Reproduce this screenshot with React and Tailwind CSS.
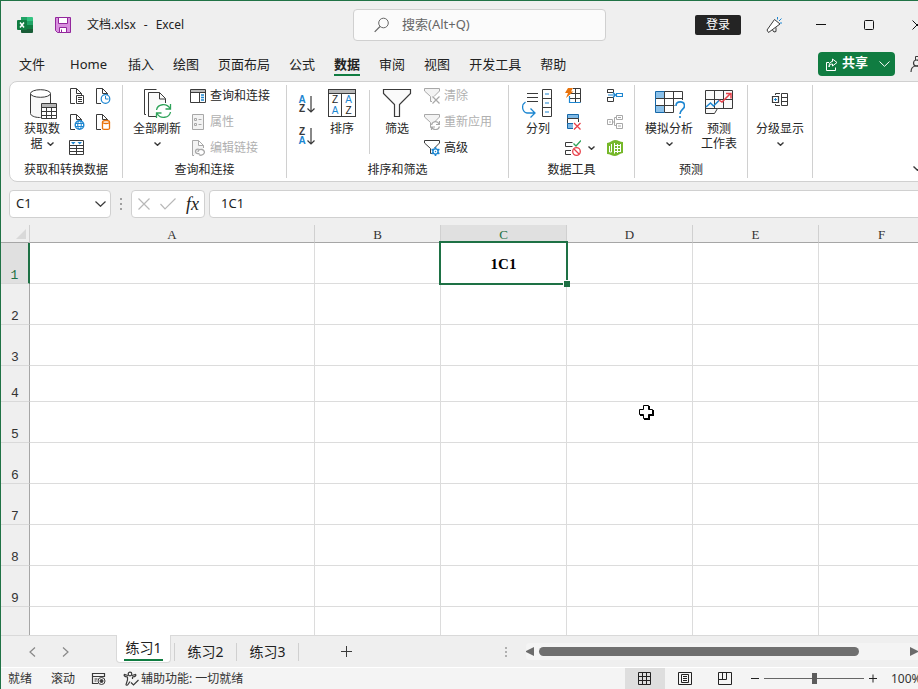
import React from "react";

const INK = "#3a3a3a";
const BLUE = "#1c86d1";
const GREEN = "#2fa35a";
const ORANGE = "#e8730c";
const RED = "#e8404a";
const MUTE = "#a8a8a8";

function Icon({ w = 16, h = 16, children, color = INK }) {
  return (
    <svg width={w} height={h} viewBox={`0 0 ${w} ${h}`} fill="none" stroke={color} strokeWidth="1" className="shrink-0" aria-hidden="true">
      {children}
    </svg>
  );
}

function Chevron({ w = 7, h = 4, stroke = 1.4, color = INK }) {
  return (
    <svg width={w} height={h} viewBox={`0 0 ${w} ${h}`} fill="none" stroke={color} strokeWidth={stroke} className="inline-block shrink-0" aria-hidden="true">
      <path d={`M.5 .5L${w / 2} ${h - 0.7}L${w - 0.5} .5`} />
    </svg>
  );
}

const ExcelLogo = () => (
  <svg width="16" height="16" viewBox="0 0 16 16" aria-hidden="true">
    <path d="M4 0h6v4H4z" fill="#21a366" />
    <path d="M10 0h5a1 1 0 0 1 1 1v3h-6z" fill="#33c481" />
    <path d="M4 4h6v4H4z" fill="#107c41" />
    <path d="M10 4h6v4h-6z" fill="#21a366" />
    <path d="M4 8h6v4H4z" fill="#185c37" />
    <path d="M10 8h6v4h-6z" fill="#107c41" />
    <path d="M4 12h12v3a1 1 0 0 1-1 1H5a1 1 0 0 1-1-1z" fill="#185c37" />
    <rect x="0" y="3" width="10" height="10" rx="1" fill="#107c41" />
    <path d="M3 5.5l4 5M7 5.5l-4 5" stroke="#fff" strokeWidth="1.5" />
  </svg>
);

const SaveIcon = () => (
  <svg width="16" height="16" viewBox="0 0 16 16" stroke="#93279c" aria-hidden="true">
    <path d="M.5 .5h15v15H2.5l-2-2z" fill="#d88fde" />
    <path d="M3.5 .5h9v6h-9z" fill="#fff" />
    <path d="M4.500 15.500v-5h7v5z" fill="#fff" />
    <path d="M6.500 12.500v3" />
  </svg>
);

const SearchIcon = () => (
  <Icon color="#666">
    <circle cx="9.500" cy="6" r="4.800" />
    <path d="M6 9.500L.7 14.800" strokeWidth="1.200" />
  </Icon>
);

const Megaphone = () => (
  <Icon>
    <path d="M8.500 2.500L1 13l1.500 2.500L14 7z" fill="#fff" />
    <path d="M6.500 13l1.500 2 2-.5v-4" />
    <path d="M11.500 0v2.500M13 4l2.500-2.500M14 6h2" stroke={BLUE} />
  </Icon>
);

const ShareIcon = () => (
  <Icon w={13} h={13} color="#fff">
    <path d="M4 4.500H1.500v8h9V9.500" />
    <path d="M7.500 1l4.500 3.500L7.500 8V6C5.500 6 4.500 7 4 9c0-3 1-5.500 3.500-5.500z" />
  </Icon>
);

const PersonIcon = () => (
  <Icon>
    <path d="M5.500 4V.5H16" />
    <circle cx="6.500" cy="7" r="3" strokeWidth="1.200" />
    <path d="M1 16c0-4 2.500-6 5.500-6s5.500 2 5.500 6" strokeWidth="1.200" />
  </Icon>
);

const DatabaseTable = () => (
  <Icon w={34} h={30}>
    <path d="M6 5h20v9H16v14c-6 0-10-2-10-4z" fill="#f8f8f8" stroke="none" />
    <path d="M5.500 4.500v20c0 2 4 4 9 4h1M25.500 4.500V14" />
    <ellipse cx="15.500" cy="4.500" rx="10" ry="3.800" fill="#fff" />
    <path d="M16.500 14.500h15v15h-15z" fill="#fff" />
    <path d="M17 15h14v3H17z" fill="#b5b5b5" stroke="none" />
    <path d="M16.500 18.500h15M16.500 22.500h15M16.500 26.500h15M21.500 18v11M26.500 18v11" />
  </Icon>
);

const Page = ({ color = INK }) => (
  <path d="M6 15.500H1.500V.5h6l5 5V7M7.500 .5v5h5" stroke={color} />
);
const PageText = () => (
  <Icon>
    <Page />
    <path d="M7.500 7.500h7v8h-7z" fill="#fff" />
    <path d="M9 9.500h4M9 11.500h4M9 13.500h4" />
  </Icon>
);
const PageClock = () => (
  <Icon>
    <Page />
    <circle cx="10.500" cy="11" r="4.300" fill="#fff" stroke={BLUE} strokeWidth="1.200" />
    <path d="M10.500 8v3h3" stroke={BLUE} />
  </Icon>
);
const PageGlobe = () => (
  <Icon>
    <Page />
    <circle cx="10.500" cy="11" r="4.300" fill="#fff" stroke={BLUE} strokeWidth="1.400" />
    <ellipse cx="10.500" cy="11" rx="1.800" ry="4.300" stroke={BLUE} />
    <path d="M6.500 9.500h8M6.500 12.500h8" stroke={BLUE} />
  </Icon>
);
const PageData = () => (
  <Icon>
    <Page />
    <path d="M7.500 8v6.500c0 1.300 7 1.300 7 0V8" fill="#fff" stroke={ORANGE} strokeWidth="1.300" />
    <ellipse cx="11" cy="8" rx="3.500" ry="1.500" fill="#fff" stroke={ORANGE} strokeWidth="1.300" />
  </Icon>
);
const TableBlue = () => (
  <Icon>
    <path d="M.5 .5h14v14H.5zM.5 5.500h14M.5 8.500h14M.5 11.500h14M7.500 5.500v9" />
    <path d="M2 2h4.500L4.250 4.500zM8.500 2H13l-2.250 2.500z" fill={BLUE} stroke="none" />
  </Icon>
);

const RefreshAll = () => (
  <Icon w={30} h={30}>
    <path d="M4 25.500H2.500V.5h12" />
    <path d="M14 27.500H6.500V3.500h11l6 6V14" fill="#fafafa" />
    <path d="M17.500 3.500v6.500h6" />
    <circle cx="21" cy="22" r="8" fill="#fff" stroke="none" />
    <path d="M14.500 21c1-6 10-7.500 13.500-1.500M28.500 15v5h-5M28.500 23c-1 6-10 7.500-13.500 1.500M14.500 29v-5h5" stroke={GREEN} strokeWidth="1.300" />
  </Icon>
);
const PanelIcon = () => (
  <Icon>
    <path d="M1 2h14v2H1z" fill="#bbb" stroke="none" />
    <path d="M.5 1.500h15v13H.5zM.5 4.500h15M9.500 4.500v10" />
    <path d="M11 7h3M11 9.500h3M11 12h3" stroke={BLUE} strokeWidth="1.500" />
  </Icon>
);
const PropsIcon = () => (
  <Icon color={MUTE}>
    <path d="M2.500 .5h11v15h-11z" fill="#f3f3f3" />
    <path d="M4.500 4.500h2v2h-2zM4.500 9.500h2v2h-2zM8.500 5.500h3M8.500 10.500h3" />
  </Icon>
);
const EditLinks = () => (
  <Icon color={MUTE}>
    <path d="M4 15.500H2.500V.5h6l5 5V8M8.500 .5v5h5" fill="#f3f3f3" />
    <path d="M9.500 9.500c-2-1-4 0-4 2s2 2.500 4 2M8 12c0-2 2-3 4-2.500s3 2.500 2 4-4 2.500-5 1" strokeWidth="1.300" />
  </Icon>
);

const SortArrow = ({ top, bottom, topClass, bottomClass }) => (
  <span className="flex h-[18px] w-[17px] items-center justify-between font-['Liberation_Sans',sans-serif] text-[10px] font-bold leading-[9px]">
    <span className="flex w-2 flex-col items-center">
      <span className={topClass}>{top}</span>
      <span className={bottomClass}>{bottom}</span>
    </span>
    <Icon w={8} h={17}>
      <path d="M4 0v16M.5 12.500L4 16l3.500-3.500" strokeWidth="1.200" />
    </Icon>
  </span>
);
const SortBox = () => (
  <span className="mb-[2px] flex h-7 w-7 flex-col border border-[#3a3a3a] bg-white font-['Liberation_Sans',sans-serif] text-[10px] leading-[11px]">
    <span className="h-1 border-b border-[#3a3a3a] bg-[#b8b8b8]" />
    <span className="grid flex-1 grid-cols-2 text-center">
      <span className="flex flex-col border-r border-[#3a3a3a]">
        <span>Z</span>
        <span className="text-[#1c86d1]">A</span>
      </span>
      <span className="flex flex-col">
        <span className="text-[#1c86d1]">A</span>
        <span>Z</span>
      </span>
    </span>
  </span>
);
const BigFunnel = () => (
  <Icon w={30} h={30}>
    <path d="M1.500 .5h27v4l-11 11v12h-5v-12l-11-11z" fill="#fafafa" strokeWidth="1.200" />
  </Icon>
);
const funnel = "M8 13.500H6.500V8.500L.5 3V.5h15V3L10 8.500";
const ClearIcon = () => (
  <Icon color={MUTE}>
    <path d={funnel} fill="#f3f3f3" />
    <path d="M8.500 8.500l7 7M15.500 8.500l-7 7" strokeWidth="1.200" />
  </Icon>
);
const ReapplyIcon = () => (
  <Icon color={MUTE}>
    <path d={funnel} fill="#f3f3f3" />
    <circle cx="11.500" cy="11.500" r="4.500" fill="#fff" stroke="none" />
    <path d="M7.500 11c1-4 6-4.500 7.500-1M15.500 7v3.500H12M15.500 12.500c-1 4-6 4-7.500 1M7.500 16v-3H11" strokeWidth="1.200" />
  </Icon>
);
const AdvancedIcon = () => (
  <Icon>
    <path d={funnel} />
    <circle cx="11.500" cy="11.500" r="2.600" fill="#fff" stroke={BLUE} strokeWidth="1.400" />
    <path d="M11.500 7v2M11.500 14v2M7.600 9.200l1.700 1M13.700 12.800l1.700 1M7.600 13.800l1.700-1M13.700 10.200l1.700-1" stroke={BLUE} strokeWidth="1.600" />
    <circle cx="11.500" cy="11.500" r=".7" fill={BLUE} stroke="none" />
  </Icon>
);

const TextToColumns = () => (
  <Icon w={32} h={30}>
    <path d="M5 4.500h11M5 8.500h11M5 12.500h11" strokeWidth="1.200" />
    <path d="M20.500 .5h9v27h-9zM20.500 9.500h9M20.500 18.500h9" />
    <path d="M23 5h4M23 14h4M23 23h4" stroke={BLUE} strokeWidth="1.200" />
    <path d="M3.500 13C-1 16 0 23 5 24h7M8.500 19.500L13 24l-4.500 4.500" stroke={BLUE} strokeWidth="1.300" />
  </Icon>
);
const FlashFill = () => (
  <Icon>
    <path d="M8 .5h7.500v14M10.500 .5v14M5 5.500h10M5 10.500h10" />
    <path d="M4.500 8v6.500h11" stroke={BLUE} strokeWidth="1.200" />
    <path d="M3 0h5L6 3.500h2.500L1 10l2-5H0z" fill={ORANGE} stroke="none" />
  </Icon>
);
const RemoveDup = () => (
  <Icon>
    <path d="M2.500 .5h11v4h-11z" fill="#7fb9e6" stroke="#1668a8" />
    <path d="M2.500 4.500h11v5h-11z" fill="#fff" />
    <path d="M2.500 9.500h6v5h-6z" fill="#7fb9e6" stroke="#1668a8" />
    <path d="M8 8h8v8H8z" fill="#fff" stroke="none" />
    <path d="M9 9l6.500 6.500M15.500 9L9 15.500" stroke={RED} strokeWidth="1.300" />
  </Icon>
);
const Validation = () => (
  <Icon>
    <path d="M7.500 2.500H.5v4h7M6 10.500H.5v4H6" />
    <path d="M8.500 3.500l2.500 2.500 5-5.500" stroke={GREEN} strokeWidth="1.300" />
    <circle cx="11.500" cy="11.500" r="3.800" stroke={RED} strokeWidth="1.300" />
    <path d="M9 9l5 5" stroke={RED} strokeWidth="1.300" />
  </Icon>
);
const Consolidate = () => (
  <Icon>
    <path d="M.5 5V1.500h6V5M.5 9v4.500h6V9M.5 4.500h6M.5 9.500h6" />
    <path d="M1 7h7M6 4.500L8.500 7 6 9.500M9.500 5.500h6v3h-6z" stroke={BLUE} strokeWidth="1.200" />
  </Icon>
);
const Relations = () => (
  <Icon color={MUTE}>
    <path d="M.5 5.500h5v5h-5zM9.500 1.500h6v4h-6zM9.500 9.500h6v5h-6zM5.500 8h2M9.500 3.500h-2v8h2M2 8h2M11 3.500h3M11 12h3" />
  </Icon>
);
const DataModel = () => (
  <svg width="16" height="16" viewBox="0 0 16 16" aria-hidden="true">
    <path d="M0 3c3 0 5-3 8-3s5 2 8 2v11c-3 0-5 3-8 3s-5-2-8-2z" fill="#76b82a" />
    <path d="M4.500 4v8M2.500 6v6h2M7.500 3v10.500M7.500 5.500h6M7.500 8.500h6M7.500 11.500h6M10.500 4v9M13.500 4v8" stroke="#fff" fill="none" />
  </svg>
);

const WhatIf = () => (
  <Icon w={32} h={30}>
    <path d="M3 3h8v20H3z" fill="#8bc1ea" stroke="none" />
    <path d="M3 10h8v6H3z" fill="#fff" stroke="none" />
    <path d="M11 2.500h18.500V12M2.500 9.500h27M2.500 16.500h19M11.500 2.500v21h9M20.500 2.500v21" />
    <path d="M11.500 2.500h-9v21h9" stroke="#1668a8" />
    <path d="M22 11h10v19H22z" fill="#fff" stroke="none" />
    <path d="M23 17c0-5.500 8.500-5.500 8.500 0 0 3.500-4.500 3.500-4.500 8" stroke={BLUE} strokeWidth="1.600" />
    <path d="M26.200 27h1.600v2h-1.600z" fill={BLUE} stroke="none" />
  </Icon>
);
const Forecast = () => (
  <Icon w={30} h={30}>
    <path d="M1.500 1.500h27v18H13.500l-3 5h-9zM1.500 19.500h12M1.500 10.500h27M10.500 1.500v18M19.500 1.500v18" fill="#fafafa" />
    <path d="M2 18l4.500-4 3 3 6-6" stroke={BLUE} strokeWidth="1.500" />
    <path d="M15 11l3 2 8.500-8.500M22 4.500h5v5" stroke={RED} strokeWidth="1.500" />
  </Icon>
);
const Outline = () => (
  <Icon w={18} h={30}>
    <path d="M10.500 4.500h6v12h-6zM10.500 8.500h6M10.500 12.500h6M4.500 6V4.500H9M4.500 15v1.500H9" />
    <path d="M1.500 7.500h6v6h-6z" fill="#fff" strokeWidth="1.200" />
    <path d="M4.500 9v3M3 10.500h3" stroke={BLUE} />
  </Icon>
);

function BigButton({ icon, lines, arrow, arrowBelow, wide }) {
  return (
    <button type="button" className={`mt-px flex shrink-0 flex-col items-center gap-[2px] text-xs leading-[15px] ${wide ? "w-12" : "w-9"}`}>
      {icon}
      <span className="flex flex-col items-center whitespace-nowrap">
        {lines.map((line, i) => (
          <span key={line} className="flex items-center gap-1">
            {line}
            {arrow && i === lines.length - 1 && <Chevron />}
          </span>
        ))}
        {arrowBelow && (
          <span className="flex h-[15px] items-center">
            <Chevron />
          </span>
        )}
      </span>
    </button>
  );
}

function SmallButton({ icon, label, disabled }) {
  return (
    <button type="button" disabled={disabled} className="flex h-4 items-center gap-1 whitespace-nowrap text-xs leading-4 disabled:text-[#b0b0b0]">
      {icon}
      {label}
    </button>
  );
}

function IconButton({ label, children }) {
  return (
    <button type="button" aria-label={label} className="flex h-4 items-center gap-[7px]">
      {children}
    </button>
  );
}

function Group({ title, className, children }) {
  return (
    <section className={`my-[3px] flex h-[93px] shrink-0 flex-col justify-between border-r border-[#d0d0d0] pb-px pt-[3px] ${className}`}>
      <div className="flex items-start">{children}</div>
      {title && <h2 className="self-stretch text-center text-xs leading-[14px]">{title}</h2>}
    </section>
  );
}

function TitleBar() {
  return (
    <header className="-mr-[23px] flex h-12 shrink-0 items-center">
      <div className="flex w-[352px] shrink-0 items-center pl-4">
        <ExcelLogo />
        <button type="button" aria-label="保存" className="ml-[22px]">
          <SaveIcon />
        </button>
        <h1 className="ml-4 flex gap-2 whitespace-nowrap text-xs">
          <span>文档.xlsx</span>
          <span>-</span>
          <span>Excel</span>
        </h1>
      </div>
      <label className="flex h-8 w-[253px] shrink-0 items-center gap-3 rounded border border-[#d0d0d0] bg-[#fbfbfb] pl-5">
        <SearchIcon />
        <input type="text" aria-label="搜索" placeholder="搜索(Alt+Q)" className="w-full min-w-0 bg-transparent text-[13px] outline-none placeholder:text-[#666]" />
      </label>
      <div className="ml-auto flex items-center">
        <button type="button" className="h-5 w-[46px] rounded-xs bg-[#242424] text-xs leading-5 text-white">登录</button>
        <button type="button" aria-label="新增功能" className="ml-[25px] mr-[15px]">
          <Megaphone />
        </button>
        <button type="button" aria-label="最小化" className="flex w-12 justify-center">
          <Icon w={10} h={10} color="#111"><path d="M0 4.500h10" /></Icon>
        </button>
        <button type="button" aria-label="最大化" className="flex w-12 justify-center">
          <Icon w={10} h={10} color="#111"><rect x=".5" y=".5" width="9" height="9" rx="1" /></Icon>
        </button>
        <button type="button" aria-label="关闭" className="flex w-12 justify-center">
          <Icon w={10} h={10} color="#111"><path d="M.5 .5l9 9M9.500 .5l-9 9" /></Icon>
        </button>
      </div>
    </header>
  );
}

const MENU = ["文件", "Home", "插入", "绘图", "页面布局", "公式", "数据", "审阅", "视图", "开发工具", "帮助"];

function MenuBar() {
  return (
    <nav className="-mr-2 flex h-8 shrink-0 items-start pl-[18px] text-[13px]">
      <ul className="flex gap-[19px]">
        {MENU.map((item) => (
          <li key={item} className={item === "Home" ? "pl-[6px] pr-[2px]" : ""}>
            <a href="#" className={`block h-[27px] whitespace-nowrap leading-[30px] ${item === "数据" ? "border-b-2 border-[#107c41] font-bold" : ""}`}>
              {item}
            </a>
          </li>
        ))}
      </ul>
      <div className="ml-auto flex items-center gap-[15px] pt-[3px]">
        <button type="button" className="flex h-6 w-[77px] items-center rounded bg-[#107c41] pl-[7px] font-bold text-white">
          <ShareIcon />
          <span className="ml-1 mr-[11px] pb-1 leading-5">共享</span>
          <Chevron w={11} h={6} stroke={1} color="#fff" />
        </button>
        <button type="button" aria-label="账户">
          <PersonIcon />
        </button>
      </div>
    </nav>
  );
}

function Ribbon() {
  return (
    <div className="-mr-4 ml-2 flex shrink-0 rounded-lg border border-[#d0d0d0] bg-white text-[#262626]">
      <Group title="获取和转换数据" className="w-[113px]">
        <div className="ml-[14px]">
          <BigButton icon={<DatabaseTable />} lines={["获取数", "据"]} arrow />
        </div>
        <div className="ml-[9px] grid grid-cols-[16px_16px] gap-[10px]">
          <IconButton label="从文本/CSV"><PageText /></IconButton>
          <IconButton label="最近使用的源"><PageClock /></IconButton>
          <IconButton label="自网站"><PageGlobe /></IconButton>
          <IconButton label="现有连接"><PageData /></IconButton>
          <IconButton label="来自表格/区域"><TableBlue /></IconButton>
        </div>
      </Group>
      <Group title="查询和连接" className="w-[164px]">
        <div className="ml-[10px] mr-[9px]">
          <BigButton icon={<RefreshAll />} lines={["全部刷新"]} arrowBelow wide />
        </div>
        <div className="flex flex-col gap-[10px]">
          <SmallButton icon={<PanelIcon />} label="查询和连接" />
          <SmallButton icon={<PropsIcon />} label="属性" disabled />
          <SmallButton icon={<EditLinks />} label="编辑链接" disabled />
        </div>
      </Group>
      <Group title="排序和筛选" className="w-[222px]">
        <div className="ml-[11px] mr-[9px] flex flex-col gap-[14px] pt-[7px]">
          <button type="button" aria-label="升序">
            <SortArrow top="A" bottom="Z" topClass="text-[#1c86d1]" bottomClass="text-[#3a3a3a]" />
          </button>
          <button type="button" aria-label="降序">
            <SortArrow top="Z" bottom="A" topClass="text-[#3a3a3a]" bottomClass="text-[#1c86d1]" />
          </button>
        </div>
        <BigButton icon={<SortBox />} lines={["排序"]} />
        <div className="mx-[9px] mt-[2px] h-16 border-l border-[#d0d0d0]" />
        <BigButton icon={<BigFunnel />} lines={["筛选"]} />
        <div className="ml-[9px] flex flex-col gap-[10px]">
          <SmallButton icon={<ClearIcon />} label="清除" disabled />
          <SmallButton icon={<ReapplyIcon />} label="重新应用" disabled />
          <SmallButton icon={<AdvancedIcon />} label="高级" />
        </div>
      </Group>
      <Group title="数据工具" className="w-[126px]">
        <div className="ml-[11px] mr-[9px]">
          <BigButton icon={<TextToColumns />} lines={["分列"]} />
        </div>
        <div className="grid grid-cols-[32px_16px] gap-[10px]">
          <IconButton label="快速填充"><FlashFill /></IconButton>
          <IconButton label="合并计算"><Consolidate /></IconButton>
          <IconButton label="删除重复值"><RemoveDup /></IconButton>
          <IconButton label="关系"><Relations /></IconButton>
          <IconButton label="数据验证"><Validation /><Chevron /></IconButton>
          <IconButton label="数据模型"><DataModel /></IconButton>
        </div>
      </Group>
      <Group title="预测" className="w-[113px]">
        <div className="ml-[10px] flex gap-2">
          <BigButton icon={<WhatIf />} lines={["模拟分析"]} arrowBelow wide />
          <BigButton icon={<Forecast />} lines={["预测", "工作表"]} />
        </div>
      </Group>
      <Group className="w-[65px]">
        <div className="ml-2">
          <BigButton icon={<Outline />} lines={["分级显示"]} arrowBelow wide />
        </div>
      </Group>
      <button type="button" aria-label="折叠功能区" className="mb-[6px] ml-auto mr-[11px] self-end leading-none">
        <Chevron w={9} h={5} />
      </button>
    </div>
  );
}

function FormulaBar() {
  return (
    <div className="-mr-4 ml-2 mt-2 flex h-7 shrink-0 text-[13px]">
      <div className="flex w-[102px] shrink-0 items-center rounded border border-[#d0d0d0] bg-white pl-[6px] pr-1">
        <input aria-label="名称框" defaultValue="C1" className="w-full min-w-0 bg-transparent outline-none" />
        <button type="button" aria-label="名称列表" className="flex">
          <Chevron w={11} h={6} stroke={1.2} />
        </button>
      </div>
      <div className="flex w-5 shrink-0 flex-col items-center justify-center gap-[3px]">
        <span className="size-[2px] bg-[#a0a0a0]" />
        <span className="size-[2px] bg-[#a0a0a0]" />
        <span className="size-[2px] bg-[#a0a0a0]" />
      </div>
      <div className="mr-1 flex w-[74px] shrink-0 items-center justify-between rounded border border-[#d0d0d0] bg-white pl-[6px] pr-[5px]">
        <button type="button" aria-label="取消">
          <Icon w={12} h={12} color="#b8b8b8"><path d="M.5 .5l11 11M11.500 .5l-11 11" strokeWidth="1.200" /></Icon>
        </button>
        <button type="button" aria-label="输入">
          <Icon w={16} h={12} color="#b8b8b8"><path d="M.5 6l4.500 5L15.500 .5" strokeWidth="1.200" /></Icon>
        </button>
        <button type="button" aria-label="插入函数" className="font-['Liberation_Serif',serif] text-lg italic leading-none">fx</button>
      </div>
      <input aria-label="编辑栏" defaultValue="1C1" className="min-w-0 flex-1 rounded border border-[#d0d0d0] bg-white px-[11px] outline-none" />
    </div>
  );
}

const COLUMNS = ["A", "B", "C", "D", "E", "F"];
const ROWS = [1, 2, 3, 4, 5, 6, 7, 8, 9];

function Sheet() {
  return (
    <main className="relative mt-[7px] min-h-0 flex-1 overflow-hidden bg-white">
      <table className="w-[944px] table-fixed border-separate border-spacing-0 font-['Liberation_Serif','Noto_Sans_CJK_SC',serif] text-sm">
        <colgroup>
          <col className="w-[29px]" />
          <col className="w-[285px]" />
          <col className="w-[126px]" span={5} />
        </colgroup>
        <thead>
          <tr className="h-[18px] bg-[#efefef]">
            <th scope="col" aria-label="全选" className="border-b border-r border-b-[#a6a6a6] border-r-[#d0d0d0] p-0 pr-[3px]">
              <svg width="10" height="10" viewBox="0 0 10 10" className="ml-auto" aria-hidden="true">
                <path d="M10 0v10H0z" fill="#d9d9d9" />
              </svg>
            </th>
            {COLUMNS.map((c) => (
              <th
                key={c}
                scope="col"
                className={`border-b border-r border-b-[#a6a6a6] border-r-[#d0d0d0] p-0 pt-[3px] text-[13px] font-normal leading-[14px] ${c === "C" ? "bg-[#e0e0e0] text-[#1e7145]" : "text-[#333]"}`}
              >
                {c}
              </th>
            ))}
          </tr>
        </thead>
        <tbody>
          {ROWS.map((r) => (
            <tr key={r} className={r === 4 ? "h-9" : "h-[41px]"}>
              <th
                scope="row"
                className={`border-b border-r border-b-[#d9d9d9] p-0 align-bottom font-['Liberation_Mono',monospace] text-[13px] font-normal leading-[14px] ${r === 1 ? "border-r-2 border-r-[#1e7145] bg-[#e0e0e0] text-[#1e7145]" : "border-r-[#a6a6a6] bg-[#efefef] text-[#333]"}`}
              >
                {r}
              </th>
              {COLUMNS.map((c) =>
                r === 1 && c === "C" ? (
                  <td key={c} className="relative border-b border-r border-[#dcdcdc] p-0 pt-[3px] text-center text-[15px] font-bold text-black">
                    1C1
                    <span className="absolute -inset-[2px] z-10 border-2 border-[#1e7145]" />
                    <span className="absolute -bottom-1 -right-1 z-10 size-[7px] border-l border-t border-white bg-[#1e7145]" />
                  </td>
                ) : (
                  <td key={c} className="border-b border-r border-[#dcdcdc] p-0" />
                )
              )}
            </tr>
          ))}
          <tr className="h-[41px]" aria-hidden="true">
            <td className="border-r border-[#a6a6a6] bg-[#efefef] p-0" />
            {COLUMNS.map((c) => (
              <td key={c} className="border-r border-[#dcdcdc] p-0" />
            ))}
          </tr>
        </tbody>
      </table>
      <svg width="16" height="16" viewBox="0 0 16 16" className="absolute left-[637px] top-[179px]" aria-hidden="true">
        <path d="M6 2h6v4h4v6h-4v4H6v-4H2V6h4z" fill="#000" />
        <path d="M5.500 1.500h5v4h4v5h-4v4h-5v-4h-4v-5h4z" fill="#fff" stroke="#000" />
      </svg>
    </main>
  );
}

function SheetTabs() {
  return (
    <div className="flex h-8 shrink-0 items-center border-t border-[#d9d9d9]">
      <div className="flex w-[115px] shrink-0 gap-[26px] self-center pl-7">
        <button type="button" aria-label="上一张">
          <Icon w={7} h={10} color="#888"><path d="M6 .5L1 5l5 4.500" strokeWidth="1.200" /></Icon>
        </button>
        <button type="button" aria-label="下一张">
          <Icon w={7} h={10} color="#888"><path d="M1 .5L6 5l-5 4.500" strokeWidth="1.200" /></Icon>
        </button>
      </div>
      <div role="tablist" className="flex h-full items-center text-sm">
        <button type="button" role="tab" aria-selected="true" className="-mt-px mr-[3px] h-7 w-[55px] self-start rounded-b border border-t-0 border-[#d9d9d9] bg-white px-[7px]">
          <span className="block whitespace-nowrap border-b-2 border-[#107c41] leading-[22px]">练习1</span>
        </button>
        <button type="button" role="tab" aria-selected="false" className="h-[18px] w-[63px] border-x border-[#d0d0d0] leading-4">练习2</button>
        <button type="button" role="tab" aria-selected="false" className="h-[18px] w-[62px] border-r border-[#d0d0d0] leading-4">练习3</button>
      </div>
      <button type="button" aria-label="新工作表" className="ml-[42px]">
        <Icon w={11} h={11}><path d="M5.500 0v11M0 5.500h11" /></Icon>
      </button>
      <div className="ml-auto flex shrink-0 flex-col gap-[2px]">
        <span className="size-[2px] bg-[#b0b0b0]" />
        <span className="size-[2px] bg-[#b0b0b0]" />
        <span className="size-[2px] bg-[#b0b0b0]" />
      </div>
      <div className="ml-[19px] flex h-[17px] w-[392px] shrink-0 items-center rounded-l bg-[#f4f4f4]">
        <button type="button" aria-label="向左滚动" className="mr-[5px]">
          <svg width="8" height="9" viewBox="0 0 8 9" aria-hidden="true"><path d="M8 0v9L0 5V4z" fill="#6b6b6b" /></svg>
        </button>
        <div className="h-[9px] w-80 rounded-full bg-[#707070]" />
        <button type="button" aria-label="向右滚动" className="ml-auto">
          <svg width="8" height="9" viewBox="0 0 8 9" aria-hidden="true"><path d="M0 0v9l8-4V4z" fill="#6b6b6b" /></svg>
        </button>
      </div>
    </div>
  );
}

function StatusBar() {
  return (
    <footer className="-mr-4 flex h-[22px] shrink-0 items-center border-t border-white bg-[#f4f4f4] pl-[7px] text-xs text-[#333]">
      <span>就绪</span>
      <span className="ml-[19px]">滚动</span>
      <button type="button" aria-label="录制宏" className="ml-4">
        <Icon>
          <path d="M7 12.500H1.500v-10h12V6M1.500 5.500h12M3.500 8h3M3.500 10h2" strokeWidth="1.200" />
          <circle cx="10.500" cy="10" r="3.500" />
          <circle cx="10.500" cy="10" r="1.500" fill={INK} />
        </Icon>
      </button>
      <button type="button" className="ml-4 flex items-center gap-[2px] whitespace-nowrap">
        <Icon>
          <circle cx="7" cy="3" r="1.800" strokeWidth="1.200" />
          <path d="M5 4.500L1.500 3.500c-1 1 0 2 3 2.500v3L3 13.500c0 1 1.500 1 2 0L7 10.500M9 4.500l3.500-1c1 1 0 2-3 2.500v2M8 11.500l2.500 2.500L15.500 9" strokeWidth="1.200" />
        </Icon>
        辅助功能: 一切就绪
      </button>
      <div className="ml-auto flex h-full items-center">
        <button type="button" aria-label="普通" className="flex h-full w-10 items-center justify-center bg-[#dedede]">
          <Icon w={14} h={13} color="#222"><path d="M.5 .5h12v12H.5zM.5 4.500h12M.5 8.500h12M4.500 .5v12M8.500 .5v12" /></Icon>
        </button>
        <button type="button" aria-label="页面布局" className="flex h-full w-10 items-center justify-center">
          <Icon w={14} h={13} color="#222"><path d="M.5 .5h13v12H.5zM3.500 2.500h7v8h-7zM5 4.500h4M5 6.500h4M5 8.500h4" /></Icon>
        </button>
        <button type="button" aria-label="分页预览" className="flex h-full w-10 items-center justify-center">
          <Icon w={14} h={13} color="#222"><path d="M.5 .5h13v12H.5zM4.500 .5v7M.5 7.500h8v-7" /></Icon>
        </button>
        <button type="button" aria-label="缩小" className="ml-[6px]">
          <Icon w={8} h={9} color="#222"><path d="M0 4.500h8" /></Icon>
        </button>
        <input
          type="range"
          aria-label="显示比例"
          min="10"
          max="190"
          defaultValue="100"
          className="mx-[5px] h-3 w-[100px] appearance-none bg-[linear-gradient(#666,#666)] bg-[length:100%_1px] bg-center bg-no-repeat [&::-webkit-slider-thumb]:h-[11px] [&::-webkit-slider-thumb]:w-[5px] [&::-webkit-slider-thumb]:appearance-none [&::-webkit-slider-thumb]:bg-[#5c5c5c]"
        />
        <button type="button" aria-label="放大">
          <Icon w={8} h={9} color="#222"><path d="M0 4.500h8M4 .5v8" /></Icon>
        </button>
        <span className="ml-[14px] w-[43px]">100%</span>
      </div>
    </footer>
  );
}

export default function App() {
  return (
    <div className="flex h-screen w-full flex-col overflow-hidden border-l border-t border-[#217346] bg-[#efefef] font-['Noto_Sans','Noto_Sans_CJK_SC',sans-serif] text-[#222]">
      <TitleBar />
      <MenuBar />
      <Ribbon />
      <FormulaBar />
      <Sheet />
      <SheetTabs />
      <StatusBar />
    </div>
  );
}
